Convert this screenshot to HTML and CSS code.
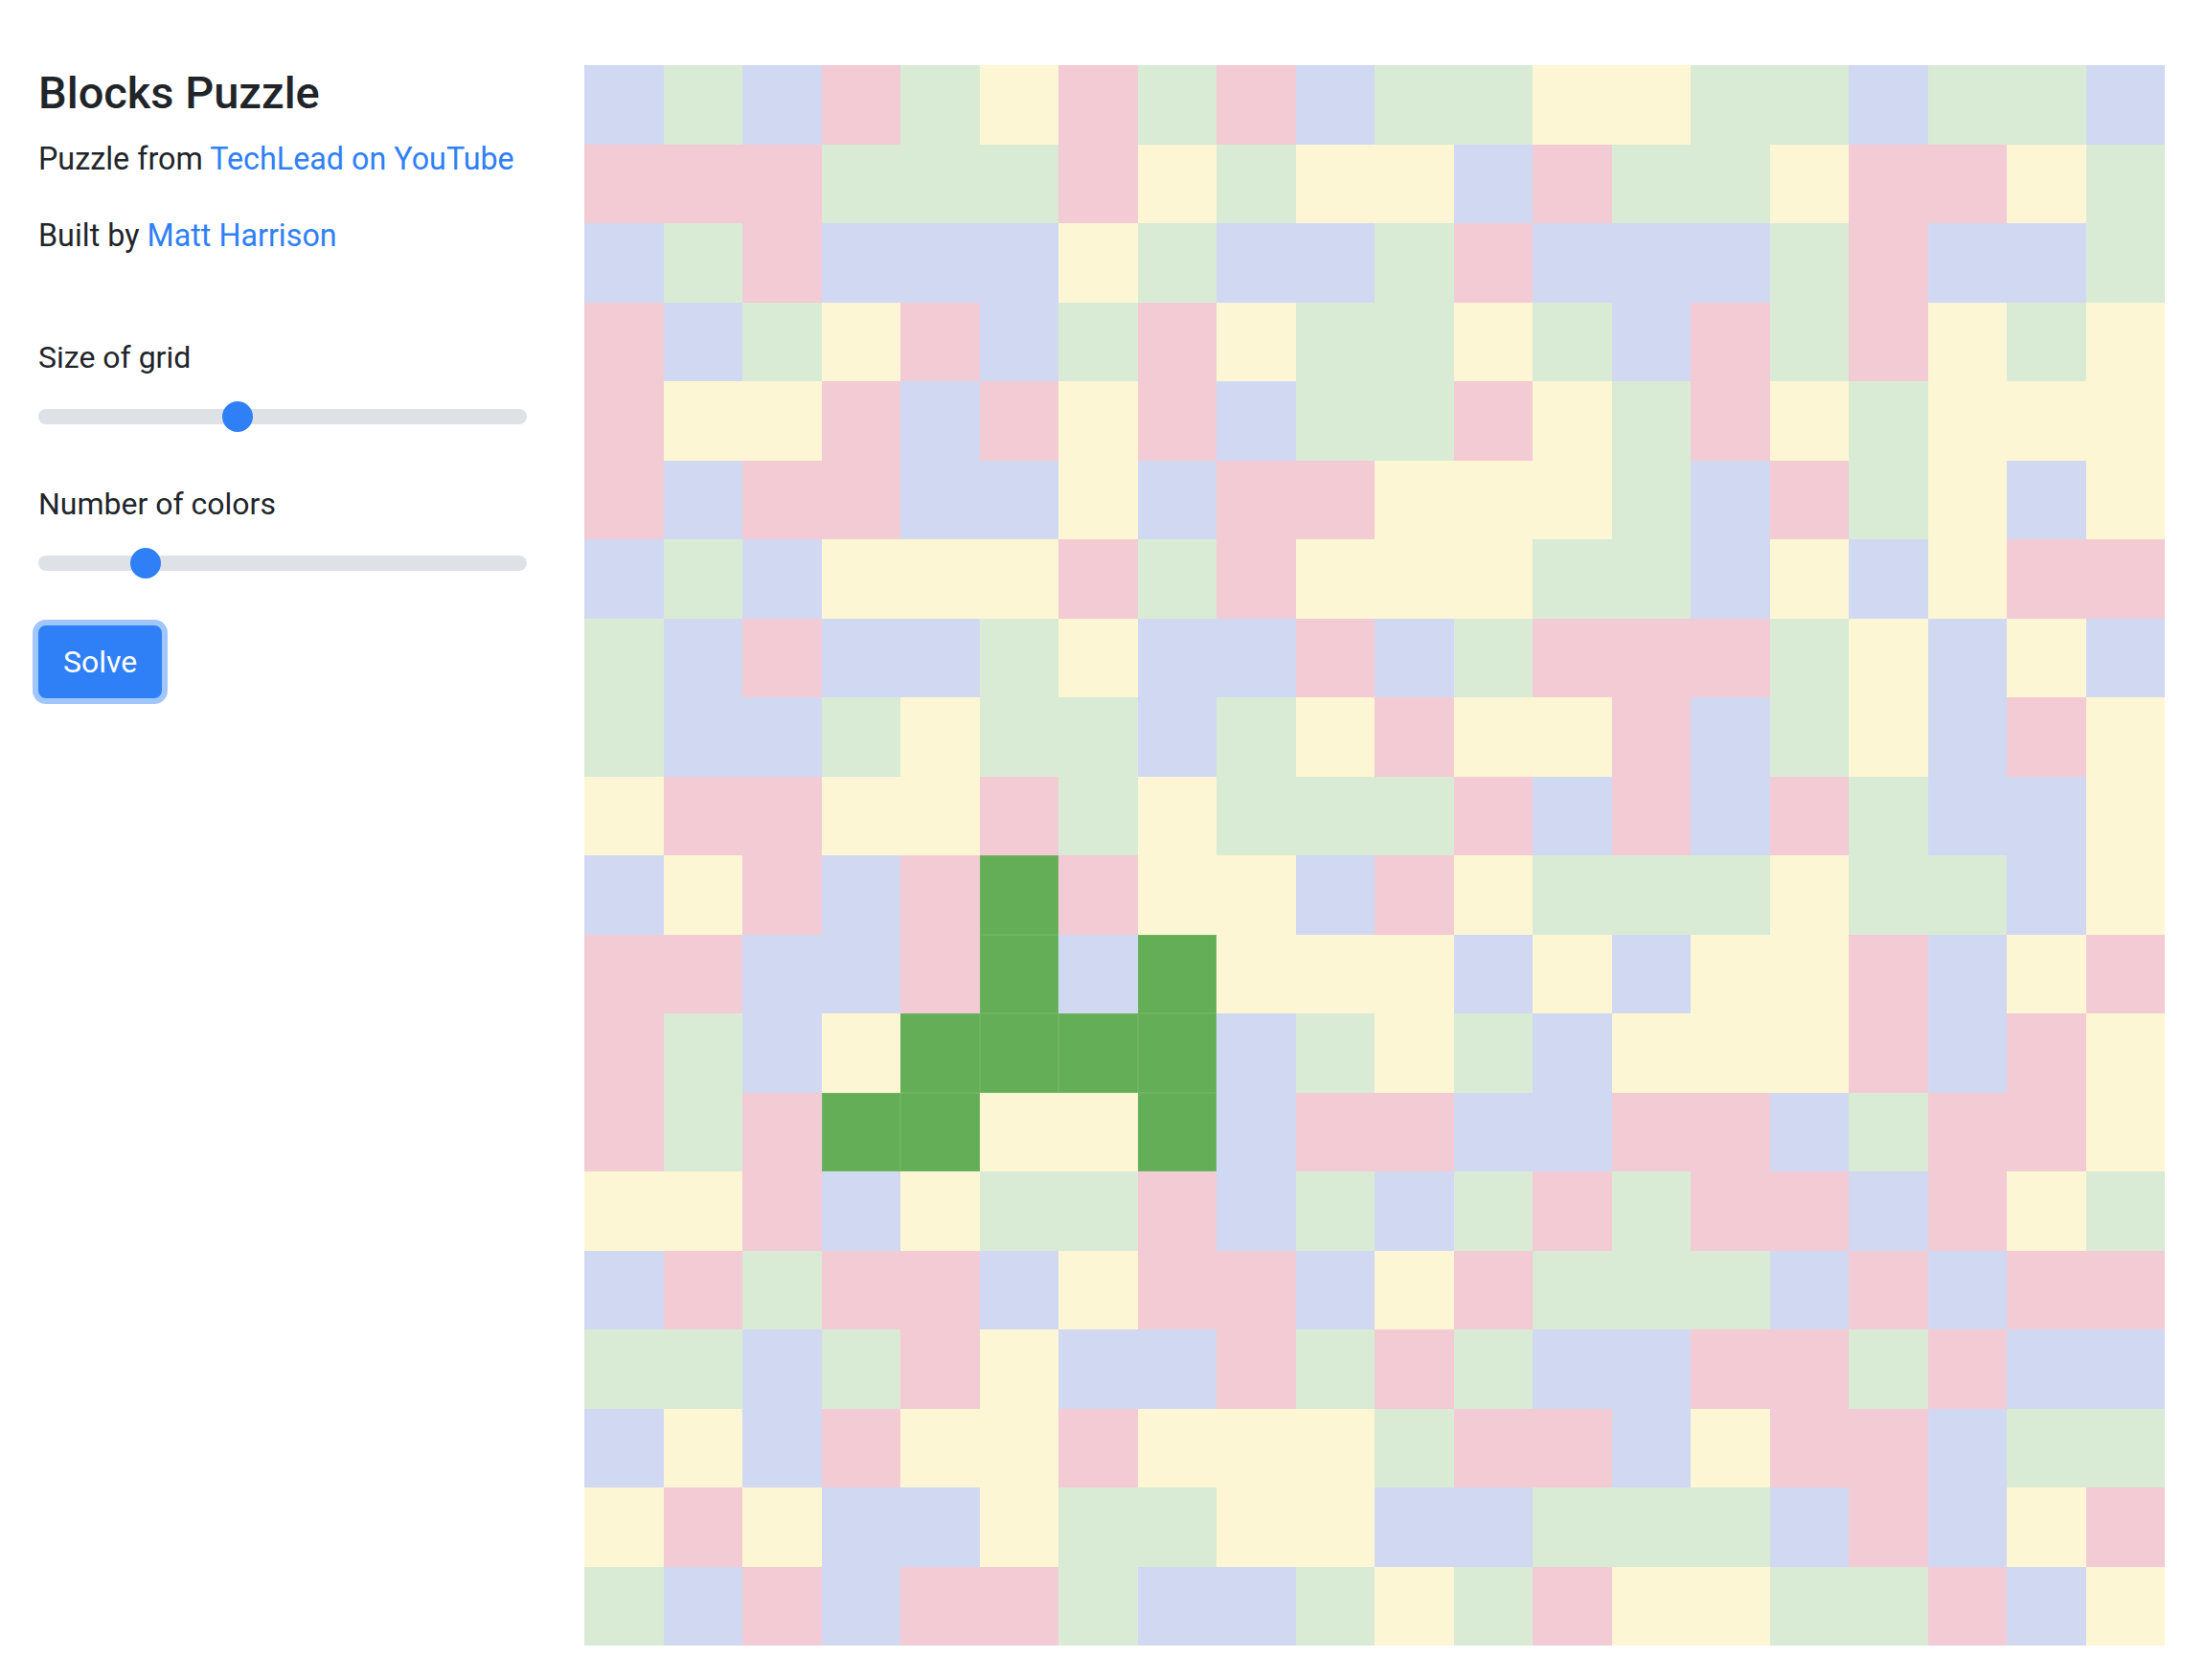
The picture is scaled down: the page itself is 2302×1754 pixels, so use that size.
FILE: index.html
```html
<!DOCTYPE html>
<html lang="en">
<head>
<meta charset="utf-8">
<title>Blocks Puzzle</title>
<link rel="stylesheet" href="styles.css">
</head>
<body>
<div class="app">
  <aside class="panel">
    <h1 class="title">Blocks Puzzle</h1>
    <p class="credit">Puzzle from <a href="#">TechLead on YouTube</a></p>
    <p class="credit">Built by <a href="#">Matt Harrison</a></p>
    <div class="field first">
      <label class="label">Size of grid</label>
      <div class="range"><div class="track"><span class="thumb" style="--v: 0.4017"></span></div></div>
    </div>
    <div class="field">
      <label class="label">Number of colors</label>
      <div class="range"><div class="track"><span class="thumb" style="--v: 0.2008"></span></div></div>
    </div>
    <button class="solve" type="button">Solve</button>
  </aside>
  <main class="board">
    <span class="b"></span><span class="g"></span><span class="b"></span><span class="p"></span><span class="g"></span><span class="y"></span><span class="p"></span><span class="g"></span><span class="p"></span><span class="b"></span><span class="g"></span><span class="g"></span><span class="y"></span><span class="y"></span><span class="g"></span><span class="g"></span><span class="b"></span><span class="g"></span><span class="g"></span><span class="b"></span>
    <span class="p"></span><span class="p"></span><span class="p"></span><span class="g"></span><span class="g"></span><span class="g"></span><span class="p"></span><span class="y"></span><span class="g"></span><span class="y"></span><span class="y"></span><span class="b"></span><span class="p"></span><span class="g"></span><span class="g"></span><span class="y"></span><span class="p"></span><span class="p"></span><span class="y"></span><span class="g"></span>
    <span class="b"></span><span class="g"></span><span class="p"></span><span class="b"></span><span class="b"></span><span class="b"></span><span class="y"></span><span class="g"></span><span class="b"></span><span class="b"></span><span class="g"></span><span class="p"></span><span class="b"></span><span class="b"></span><span class="b"></span><span class="g"></span><span class="p"></span><span class="b"></span><span class="b"></span><span class="g"></span>
    <span class="p"></span><span class="b"></span><span class="g"></span><span class="y"></span><span class="p"></span><span class="b"></span><span class="g"></span><span class="p"></span><span class="y"></span><span class="g"></span><span class="g"></span><span class="y"></span><span class="g"></span><span class="b"></span><span class="p"></span><span class="g"></span><span class="p"></span><span class="y"></span><span class="g"></span><span class="y"></span>
    <span class="p"></span><span class="y"></span><span class="y"></span><span class="p"></span><span class="b"></span><span class="p"></span><span class="y"></span><span class="p"></span><span class="b"></span><span class="g"></span><span class="g"></span><span class="p"></span><span class="y"></span><span class="g"></span><span class="p"></span><span class="y"></span><span class="g"></span><span class="y"></span><span class="y"></span><span class="y"></span>
    <span class="p"></span><span class="b"></span><span class="p"></span><span class="p"></span><span class="b"></span><span class="b"></span><span class="y"></span><span class="b"></span><span class="p"></span><span class="p"></span><span class="y"></span><span class="y"></span><span class="y"></span><span class="g"></span><span class="b"></span><span class="p"></span><span class="g"></span><span class="y"></span><span class="b"></span><span class="y"></span>
    <span class="b"></span><span class="g"></span><span class="b"></span><span class="y"></span><span class="y"></span><span class="y"></span><span class="p"></span><span class="g"></span><span class="p"></span><span class="y"></span><span class="y"></span><span class="y"></span><span class="g"></span><span class="g"></span><span class="b"></span><span class="y"></span><span class="b"></span><span class="y"></span><span class="p"></span><span class="p"></span>
    <span class="g"></span><span class="b"></span><span class="p"></span><span class="b"></span><span class="b"></span><span class="g"></span><span class="y"></span><span class="b"></span><span class="b"></span><span class="p"></span><span class="b"></span><span class="g"></span><span class="p"></span><span class="p"></span><span class="p"></span><span class="g"></span><span class="y"></span><span class="b"></span><span class="y"></span><span class="b"></span>
    <span class="g"></span><span class="b"></span><span class="b"></span><span class="g"></span><span class="y"></span><span class="g"></span><span class="g"></span><span class="b"></span><span class="g"></span><span class="y"></span><span class="p"></span><span class="y"></span><span class="y"></span><span class="p"></span><span class="b"></span><span class="g"></span><span class="y"></span><span class="b"></span><span class="p"></span><span class="y"></span>
    <span class="y"></span><span class="p"></span><span class="p"></span><span class="y"></span><span class="y"></span><span class="p"></span><span class="g"></span><span class="y"></span><span class="g"></span><span class="g"></span><span class="g"></span><span class="p"></span><span class="b"></span><span class="p"></span><span class="b"></span><span class="p"></span><span class="g"></span><span class="b"></span><span class="b"></span><span class="y"></span>
    <span class="b"></span><span class="y"></span><span class="p"></span><span class="b"></span><span class="p"></span><span class="d"></span><span class="p"></span><span class="y"></span><span class="y"></span><span class="b"></span><span class="p"></span><span class="y"></span><span class="g"></span><span class="g"></span><span class="g"></span><span class="y"></span><span class="g"></span><span class="g"></span><span class="b"></span><span class="y"></span>
    <span class="p"></span><span class="p"></span><span class="b"></span><span class="b"></span><span class="p"></span><span class="d"></span><span class="b"></span><span class="d"></span><span class="y"></span><span class="y"></span><span class="y"></span><span class="b"></span><span class="y"></span><span class="b"></span><span class="y"></span><span class="y"></span><span class="p"></span><span class="b"></span><span class="y"></span><span class="p"></span>
    <span class="p"></span><span class="g"></span><span class="b"></span><span class="y"></span><span class="d"></span><span class="d"></span><span class="d"></span><span class="d"></span><span class="b"></span><span class="g"></span><span class="y"></span><span class="g"></span><span class="b"></span><span class="y"></span><span class="y"></span><span class="y"></span><span class="p"></span><span class="b"></span><span class="p"></span><span class="y"></span>
    <span class="p"></span><span class="g"></span><span class="p"></span><span class="d"></span><span class="d"></span><span class="y"></span><span class="y"></span><span class="d"></span><span class="b"></span><span class="p"></span><span class="p"></span><span class="b"></span><span class="b"></span><span class="p"></span><span class="p"></span><span class="b"></span><span class="g"></span><span class="p"></span><span class="p"></span><span class="y"></span>
    <span class="y"></span><span class="y"></span><span class="p"></span><span class="b"></span><span class="y"></span><span class="g"></span><span class="g"></span><span class="p"></span><span class="b"></span><span class="g"></span><span class="b"></span><span class="g"></span><span class="p"></span><span class="g"></span><span class="p"></span><span class="p"></span><span class="b"></span><span class="p"></span><span class="y"></span><span class="g"></span>
    <span class="b"></span><span class="p"></span><span class="g"></span><span class="p"></span><span class="p"></span><span class="b"></span><span class="y"></span><span class="p"></span><span class="p"></span><span class="b"></span><span class="y"></span><span class="p"></span><span class="g"></span><span class="g"></span><span class="g"></span><span class="b"></span><span class="p"></span><span class="b"></span><span class="p"></span><span class="p"></span>
    <span class="g"></span><span class="g"></span><span class="b"></span><span class="g"></span><span class="p"></span><span class="y"></span><span class="b"></span><span class="b"></span><span class="p"></span><span class="g"></span><span class="p"></span><span class="g"></span><span class="b"></span><span class="b"></span><span class="p"></span><span class="p"></span><span class="g"></span><span class="p"></span><span class="b"></span><span class="b"></span>
    <span class="b"></span><span class="y"></span><span class="b"></span><span class="p"></span><span class="y"></span><span class="y"></span><span class="p"></span><span class="y"></span><span class="y"></span><span class="y"></span><span class="g"></span><span class="p"></span><span class="p"></span><span class="b"></span><span class="y"></span><span class="p"></span><span class="p"></span><span class="b"></span><span class="g"></span><span class="g"></span>
    <span class="y"></span><span class="p"></span><span class="y"></span><span class="b"></span><span class="b"></span><span class="y"></span><span class="g"></span><span class="g"></span><span class="y"></span><span class="y"></span><span class="b"></span><span class="b"></span><span class="g"></span><span class="g"></span><span class="g"></span><span class="b"></span><span class="p"></span><span class="b"></span><span class="y"></span><span class="p"></span>
    <span class="g"></span><span class="b"></span><span class="p"></span><span class="b"></span><span class="p"></span><span class="p"></span><span class="g"></span><span class="b"></span><span class="b"></span><span class="g"></span><span class="y"></span><span class="g"></span><span class="p"></span><span class="y"></span><span class="y"></span><span class="g"></span><span class="g"></span><span class="p"></span><span class="b"></span><span class="y"></span>
  </main>
</div>
</body>
</html>
```

FILE: styles.css
```css
* {
  box-sizing: border-box;
}

html, body {
  margin: 0;
  padding: 0;
  background: #ffffff;
}

body {
  font-family: Roboto, "Liberation Sans", Arial, sans-serif;
  color: #212529;
}

.app {
  display: flex;
  align-items: flex-start;
  padding: 68px 0 0 40px;
  gap: 60px;
}

.panel {
  width: 510px;
  flex: 0 0 510px;
  display: flex;
  flex-direction: column;
  align-items: flex-start;
}

.title {
  margin: 0 0 16px;
  font-size: 47px;
  line-height: 57.6px;
  font-weight: 500;
  letter-spacing: 0;
}

.credit {
  margin: 0 0 32px;
  font-size: 32.3px;
  line-height: 48px;
}

.credit a {
  color: #2f80f6;
  text-decoration: none;
}

.field {
  width: 100%;
  display: flex;
  flex-direction: column;
  margin-top: 45px;
}

.field.first {
  margin-top: 47px;
}

.label {
  display: block;
  font-size: 32px;
  line-height: 48px;
  margin-bottom: 16px;
}

.range {
  height: 44px;
  display: flex;
  align-items: center;
  width: 100%;
}

.track {
  position: relative;
  width: 100%;
  height: 16px;
  border-radius: 16px;
  background: #dee2e6;
}

.thumb {
  position: absolute;
  top: 50%;
  left: calc((100% - 32px) * var(--v));
  width: 32px;
  height: 32px;
  margin-top: -16px;
  border-radius: 50%;
  background: #2f80f6;
}

.solve {
  margin-top: 43px;
  height: 76px;
  padding: 12px 24px;
  border: 2px solid #2f80f6;
  border-radius: 8px;
  background: #2f80f6;
  color: #ffffff;
  font-family: Roboto, "Liberation Sans", Arial, sans-serif;
  font-size: 32px;
  line-height: 48px;
  box-shadow: 0 0 0 6px rgba(47, 128, 246, 0.45);
  cursor: pointer;
}

.board {
  width: 1650px;
  height: 1650px;
  flex: 0 0 1650px;
  display: grid;
  grid-template-columns: repeat(20, 1fr);
  grid-template-rows: repeat(20, 1fr);
}

.board > span {
  display: block;
}

.board > .b { background: #d1d9f2; }
.board > .g { background: #d9ebd5; }
.board > .p { background: #f3cbd4; }
.board > .y { background: #fdf6d4; }
.board > .d {
  background: #63ae56;
  box-shadow: inset 0 0 0 1px rgba(255, 255, 255, 0.08);
}
```
